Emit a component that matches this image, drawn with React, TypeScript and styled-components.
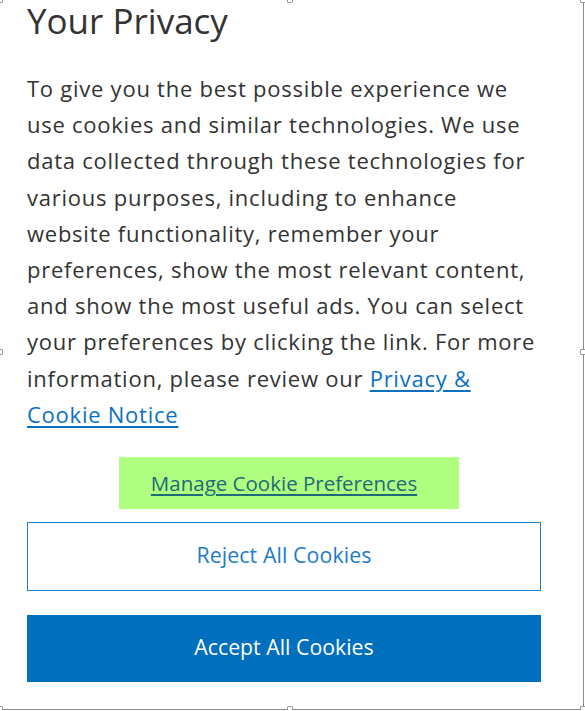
import React from 'react';
import styled, { createGlobalStyle } from 'styled-components';

const GlobalStyle = createGlobalStyle`
	html, body {
		margin: 0;
		padding: 0;
		background: #ffffff;
	}
`;

const Frame = styled.div`
	position: relative;
	box-sizing: border-box;
	width: 584px;
	height: 710px;
	border-right: 1px solid #8a8a8a;
	border-bottom: 1px solid #8a8a8a;
	padding: 0 42px 0 27px;
	display: flex;
	flex-direction: column;
	font-family: "Open Sans", "Noto Sans", sans-serif;
	color: #333333;
`;

const Handle = styled.span<{ x: number, y: number }>`
	position: absolute;
	left: ${props => props.x}px;
	top: ${props => props.y}px;
	width: 6px;
	height: 6px;
	box-sizing: border-box;
	border: 1px solid #9a9a9a;
	border-radius: 1px;
	background: #ffffff;
`;

const Title = styled.h2`
	margin: 0;
	font-size: 35px;
	font-weight: 400;
	line-height: 42px;
	color: #333333;
`;

const Body = styled.p`
	margin: 28px 0 0 0;
	font-size: 22px;
	letter-spacing: 0.75px;
	line-height: 36.2px;
	white-space: nowrap;
	color: #333333;
`;

const Link = styled.a`
	color: #0a70c2;
	text-decoration: underline;
	text-underline-offset: 3px;
`;

const Actions = styled.div`
	display: flex;
	flex-direction: column;
	align-items: center;
	margin-top: 25px;
`;

const ManageButton = styled.button`
	width: 340px;
	height: 52px;
	margin-left: 10px;
	padding: 0 10px 0 0;
	border: none;
	background: #b0ff80;
	color: #1d6b78;
	font-family: inherit;
	font-size: 20.5px;
	white-space: nowrap;
	text-decoration: underline;
	text-underline-offset: 3px;
	cursor: pointer;
`;

const WideButton = styled.button<{ filled?: boolean }>`
	width: 100%;
	box-sizing: border-box;
	height: ${props => props.filled ? 67 : 69}px;
	margin-top: ${props => props.filled ? 24 : 13}px;
	padding: 0 0 4px 0;
	border: 1px solid ${props => props.filled ? '#006fbe' : '#1b7fd0'};
	background: ${props => props.filled ? '#006fbe' : '#ffffff'};
	color: ${props => props.filled ? '#ffffff' : '#1e7bc9'};
	font-family: inherit;
	font-size: 21.3px;
	letter-spacing: ${props => props.filled ? 0 : 0.1}px;
	white-space: nowrap;
	cursor: pointer;
`;

const handles = [
	{ x: -3, y: -3 }, { x: 287, y: -3 }, { x: 580, y: -3 },
	{ x: -3, y: 349 }, { x: 580, y: 349 },
	{ x: -3, y: 706 }, { x: 287, y: 706 }, { x: 580, y: 706 },
];

export default function App () {
	return (
		<>
			<GlobalStyle />
			<Frame>
				{handles.map((h, i) => <Handle key={i} x={h.x} y={h.y} />)}
				<Title>Your Privacy</Title>
				<Body>
					To give you the best possible experience we<br />
					use cookies and similar technologies. We use<br />
					data collected through these technologies for<br />
					various purposes, including to enhance<br />
					website functionality, remember your<br />
					preferences, show the most relevant content,<br />
					and show the most useful ads. You can select<br />
					your preferences by clicking the link. For more<br />
					information, please review our <Link href="#">Privacy &amp;<br />
					Cookie Notice</Link>
				</Body>
				<Actions>
					<ManageButton>Manage Cookie Preferences</ManageButton>
					<WideButton>Reject All Cookies</WideButton>
					<WideButton filled>Accept All Cookies</WideButton>
				</Actions>
			</Frame>
		</>
	);
}
